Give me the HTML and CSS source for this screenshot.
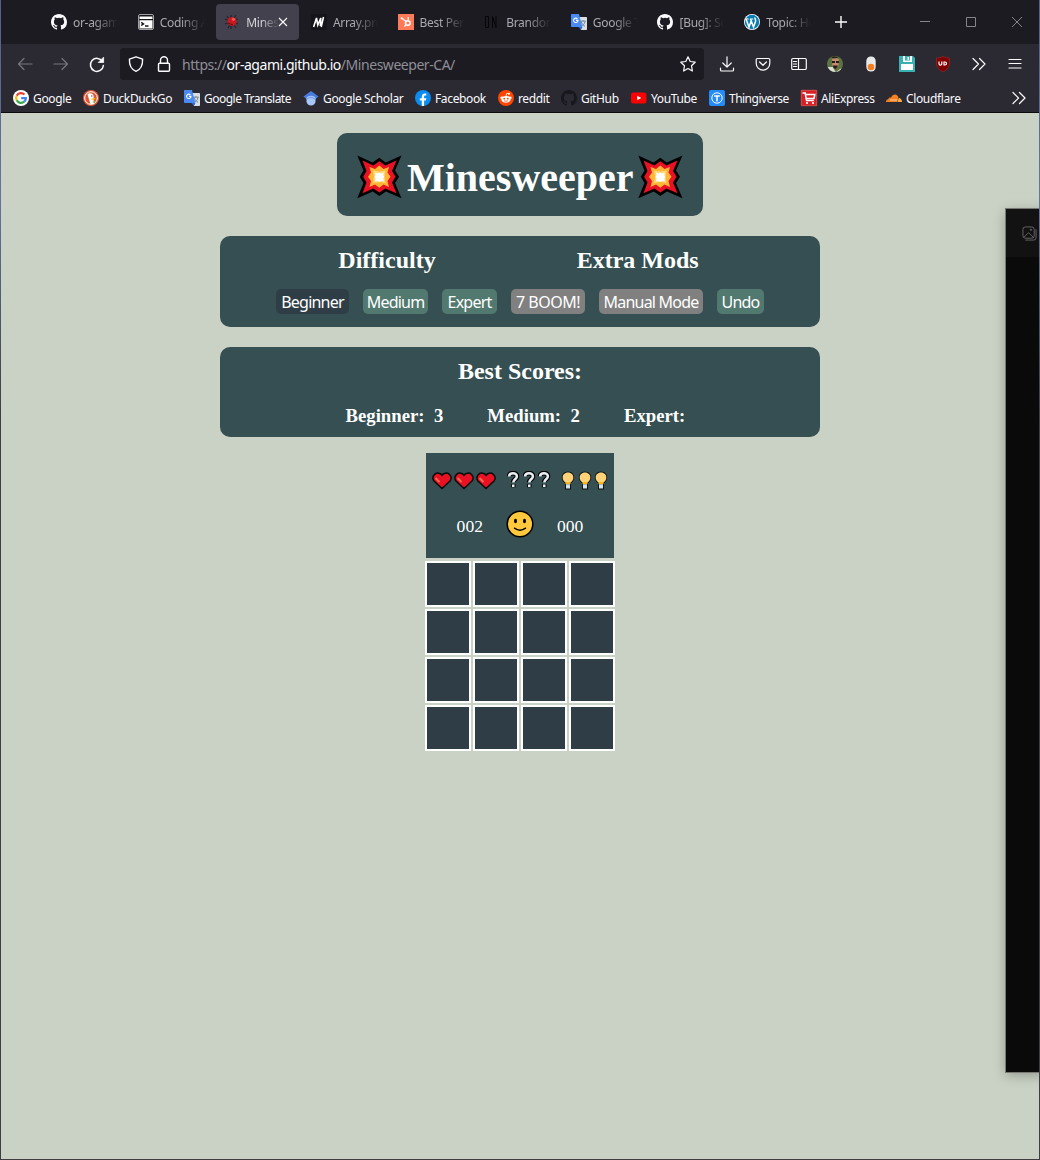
FILE: index.html
```html
<!DOCTYPE html>
<html lang="en">
<head>
<meta charset="utf-8">
<title>Minesweeper</title>
<link rel="stylesheet" href="styles.css">
</head>
<body>
<svg class="defs" aria-hidden="true">
  <symbol id="github" viewBox="0 0 16 16"><path fill="currentColor" fill-rule="evenodd" d="M8 0C3.58 0 0 3.58 0 8c0 3.54 2.29 6.53 5.47 7.59.4.07.55-.17.55-.38v-1.49c-2.01.37-2.53-.49-2.69-.94-.09-.23-.48-.94-.82-1.13-.28-.15-.68-.52-.01-.53.63-.01 1.08.58 1.23.82.72 1.21 1.87.87 2.33.66.07-.52.28-.87.51-1.07-1.78-.2-3.64-.89-3.64-3.95 0-.87.31-1.59.82-2.15-.08-.2-.36-1.02.08-2.12 0 0 .67-.21 2.2.82a7.42 7.42 0 0 1 4 0c1.53-1.04 2.2-.82 2.2-.82.44 1.1.16 1.92.08 2.12.51.56.82 1.27.82 2.15 0 3.07-1.87 3.75-3.65 3.95.29.25.54.73.54 1.48v2.2c0 .21.15.46.55.38A8 8 0 0 0 16 8c0-4.42-3.58-8-8-8z"/></symbol>
  <symbol id="translate" viewBox="0 0 16 16"><path fill="#dcdfe2" d="M6 3h9.2a.8.8 0 0 1 .8.8v11.4a.8.8 0 0 1-.8.8H10z"/><path fill="none" stroke="#6b8791" d="M9.2 7.2h5.6M12 6v1M10 7.5c.8 2.5 2.2 3.8 4 4.8M14 7.5c-.5 2.5-2 3.8-3.5 4.8"/><path fill="#4a8af4" d="M.8 0H8l3.4 13H.8a.8.8 0 0 1-.8-.8V.8A.8.8 0 0 1 .8 0z"/><path fill="#3367d6" d="M7.5 13h4L10 16z"/><path fill="none" stroke="#fff" stroke-width="1.1" d="M6.4 4.8a2.2 2.2 0 1 0 .6 1.6H5"/></symbol>
  <symbol id="boom" viewBox="0 0 45 44"><path fill="#000" d="M.3.500L15.500 7.500 22.300 2.800l6.500 4.700L44.500.500 38 15.500l4 6.300-4 6.200 6.500 15.200-15.500-6.700-6.700 4.500-6.500-4.500L.3 43.200 6.500 28l-3.700-6.200 3.700-6.300z"/><path fill="#e81224" d="M5.500 5.500L16.300 10.500l6-4.300 6 4.300L39.500 5.500 35 16l3.500 5.800L35 27.500l4.500 10.700L28.300 33.500l-6 4-6-4L5.500 38.200 9.500 27.500 6.200 21.800 9.500 16z"/><path fill="#ffb636" d="M12.500 12l5.500 2 4.300-3.500 4.200 3.500 5.500-2-1.500 5.500 3 4.300-3 4.200 1.500 6-5.500-2.500-4.200 3.200-4.300-3.200-5.500 2.500 1.500-6-3-4.200 3-4.300z"/><path fill="#ffd679" d="M16 15.500l6.300 1 6.200-1-1 6.300 1 6.200-6.200-1-6.300 1 1-6.200z"/><path fill="#fff" d="M18 17.500l2.500 1 1.800-1 2 1 2.500-1-.5 2.800 1 1.700-1 1.800.5 2.700-2.500-.5-2 1-1.800-1-2.500.5.5-2.700-1-1.800 1-1.700z"/></symbol>
  <symbol id="heart" viewBox="0 0 20 18"><path fill="#e81224" stroke="#0b0b0b" stroke-width="1.500" d="M10 16.500L2 9C-1 5 3 .2 7 1.300q2 .5 3 2 1-1.500 3-2C17 .2 21 5 18 9z"/><path fill="none" stroke="#f36b4f" stroke-width="2" d="M3.500 6l4 4"/></symbol>
  <symbol id="question" viewBox="0 0 13 18"><path fill="none" stroke="#000" stroke-width="4.800" stroke-linejoin="round" d="M2 5C2 .8 10.500 .8 10.500 5c0 3-4 3.200-4 6.300M6.500 13.500v3"/><path fill="none" stroke="#e9edf1" stroke-width="2.700" d="M2.200 5.300C2.200 1 10.300 1 10.300 5.100c0 3-3.800 3.200-3.800 6.500M6.500 13.700v2.700"/></symbol>
  <symbol id="bulb" viewBox="0 0 14 19"><path fill="#111" d="M4 18.500v-6.200C-1.500 8.500.5.600 7 .6s8.500 7.900 3 11.700v6.200z"/><path fill="#ffd27a" d="M7 1.400c5.800 0 7.300 6.800 2.400 10.200v1.200H4.600v-1.200C-.3 8.200 1.200 1.400 7 1.400z"/><path fill="#f7b719" d="M4.700 11h4.600v2.300H4.700z"/><path fill="#cfe3ee" d="M5 13.300h4v4.200H5z"/></symbol>
  <symbol id="chevrons" viewBox="0 0 16 16"><path fill="none" stroke="currentColor" stroke-width="1.200" stroke-linecap="round" stroke-linejoin="round" d="M2 2.500L7.500 8 2 13.500M8.500 2.500L14 8l-5.500 5.500"/></symbol>
</svg>
<div class="window">
  <header class="chrome">
    <div class="tabbar">
      <div class="tabs">
        <div class="tab"><svg class="ico white"><use href="#github"/></svg><span>or-agami</span></div>
        <div class="tab"><svg class="ico" viewBox="0 0 16 16"><rect x=".5" y=".5" width="15" height="15" rx="1.500" fill="#16151b" stroke="#ddd" stroke-width=".7"/><path fill="#fff" d="M1.500 2.500h13V5h-13zM1.500 6.200h13v8.300h-13z"/><path d="M3.200 8.300l2.300 1.600-2.300 1.600M7 12h3.500" fill="none" stroke="#16151b" stroke-width="1.500"/></svg><span>Coding A</span></div>
        <div class="tab active"><svg class="ico" viewBox="0 0 16 16"><path stroke="#26242c" stroke-width="1.200" d="M3 2l9 12M12 1L4 14M1 5l13 5M1 10l13-5M7 1v14"/><circle cx="8" cy="7.500" r="4.600" fill="#c51a20"/><circle cx="9.500" cy="5.300" r="1.600" fill="#f4565a"/><path stroke="#660c12" d="M4 9l5 2"/></svg><span>Minesw</span><svg class="close" viewBox="0 0 10 10"><path stroke="#fbfbfe" stroke-width="1.100" d="M1 1l8 8M9 1L1 9"/></svg></div>
        <div class="tab"><svg class="ico" viewBox="0 0 16 16"><path fill="#15141a" d="M0 0h16v16H0z"/><path fill="none" stroke="#fff" stroke-width="1.600" d="M2.600 13L5.500 4l1.300 7 3-7-.4 8M12.500 3L10.200 13"/></svg><span>Array.prot</span></div>
        <div class="tab"><svg class="ico" viewBox="0 0 16 16"><path fill="#ff7a59" d="M0 0h16v16H0z"/><circle cx="9.800" cy="9" r="2.300" fill="none" stroke="#fff" stroke-width="1.500"/><path fill="none" stroke="#fff" stroke-width="1.200" d="M3.500 4l4.600 3.400M10.200 3v3.500M8.200 10.700L6.300 12.500"/><circle cx="3.600" cy="4.200" r="1" fill="#fff"/></svg><span>Best Perso</span></div>
        <div class="tab"><svg class="ico" viewBox="0 0 16 16"><path fill="none" stroke="#060608" d="M1.500 2.500h3v11h-3zM8.500 14V2.500l3.500 11V2"/></svg><span>Brandon</span></div>
        <div class="tab"><svg class="ico"><use href="#translate"/></svg><span>Google Tr</span></div>
        <div class="tab"><svg class="ico white"><use href="#github"/></svg><span>[Bug]: Scr</span></div>
        <div class="tab"><svg class="ico" viewBox="0 0 16 16"><circle cx="8" cy="8" r="8" fill="#fff"/><circle cx="8" cy="8" r="7.200" fill="#0a7db5"/><path fill="none" stroke="#fff" stroke-width="1.500" d="M2 5l3 8 2.500-7M6.500 5l3 8 2-5.500c.6-2-1-2.500-.4-4"/><path stroke="#fff" d="M1.500 5h3.200M6 5h3.200"/></svg><span>Topic: How</span></div>
      </div>
      <svg class="newtab" viewBox="0 0 16 16"><path stroke="#fbfbfe" stroke-width="1.400" d="M8 2v12M2 8h12"/></svg>
      <div class="controls">
        <svg viewBox="0 0 12 12"><path d="M1 5.500h10"/></svg>
        <svg viewBox="0 0 12 12"><path d="M1.500 1.500h9v9h-9z"/></svg>
        <svg viewBox="0 0 12 12"><path d="M1 1l10 10M11 1L1 11"/></svg>
      </div>
    </div>
    <div class="toolbar">
      <div class="nav">
        <svg class="line dim" viewBox="0 0 16 16"><path d="M15 8H1.500M7 2.500L1.500 8 7 13.500"/></svg>
        <svg class="line dim" viewBox="0 0 16 16"><path d="M1 8h13.500M9 2.500L14.500 8 9 13.500"/></svg>
        <svg class="line" viewBox="0 0 16 16"><path stroke-width="1.500" d="M13.500 5.500A6.500 6.500 0 1 0 14.400 9.500"/><path fill="#fbfbfe" stroke-width=".8" d="M14.600 1.500v5h-5z"/></svg>
      </div>
      <div class="urlbar">
        <svg class="line" viewBox="0 0 16 16"><path stroke-width="1.400" d="M8 .8l6.600 2.300C14.800 8.600 12.500 13.500 8 15.300 3.500 13.500 1.200 8.600 1.400 3.100z"/></svg>
        <svg class="line lock" viewBox="0 0 16 16"><path stroke-width="1.400" d="M3.500 7.200h9a1 1 0 0 1 1 1v6a1 1 0 0 1-1 1h-9a1 1 0 0 1-1-1v-6a1 1 0 0 1 1-1zM4.500 7V4.300a3.500 3.500 0 0 1 7 0V7"/></svg>
        <div class="url">https://<b>or-agami.github.io</b>/Minesweeper-CA/</div>
        <svg class="line star" viewBox="0 0 16 16"><path d="M8 .8l2.200 4.700 5 .7-3.700 3.500.9 5.300L8 12.500 3.600 15l.9-5.300L.8 6.200l5-.7z"/></svg>
      </div>
      <div class="tools">
        <svg class="line" viewBox="0 0 16 16"><path d="M8 .8v10M3.800 7L8 11.200 12.200 7M1.500 12v2a1 1 0 0 0 1 1h11a1 1 0 0 0 1-1v-2"/></svg>
        <svg class="line" viewBox="0 0 16 16"><path d="M2.500 2.500h11a1.300 1.300 0 0 1 1.300 1.300v3.500a6.800 6.800 0 0 1-13.600 0V3.800a1.300 1.300 0 0 1 1.300-1.300zM4.600 6L8 9.300 11.400 6"/></svg>
        <svg class="line" viewBox="0 0 16 16"><path d="M2 2.500h12a1.300 1.300 0 0 1 1.300 1.300v8.400a1.300 1.300 0 0 1-1.300 1.300H2A1.300 1.300 0 0 1 .7 12.200V3.800A1.300 1.300 0 0 1 2 2.500zM7.500 2.500v11M2.500 5.500h3M2.500 8h3M2.500 10.500h3"/></svg>
        <svg viewBox="0 0 16 16"><circle cx="8" cy="8" r="8" fill="#5b7442"/><path fill="#dedcd7" d="M.7 11l5 0 3 5Q3 16 .7 11z"/><path fill="#e8dfc7" d="M9 16l5.500-4q-1 3-5.500 4z"/><path fill="#c48b70" d="M5 2.500q4-2.500 7 1l-.5 6-3 3.500L5.500 10z"/><path fill="#261b1b" d="M5 5h3v2H5zM9 5h3v2H9zM6 9.500h5l-2.200 3.500-2.300-1z"/><path fill="#2b241c" d="M4.500 1q4-2 7 1l-6 .500z"/></svg>
        <svg viewBox="0 0 16 16"><rect x="3.300" y=".5" width="9.400" height="15" rx="4.500" fill="#e9e9ea"/><circle cx="8" cy="11" r="3.300" fill="#f57f20"/></svg>
        <svg viewBox="0 0 16 16"><path fill="#37b1b2" d="M0 0h14l2 2v14H0z"/><path fill="#fff" d="M4 0h2v5.500H4zM11 0h2v5.500h-2zM4 4.500h9v1.500H4zM8.500 1H10v3H8.500zM2 8h12v6H2z"/></svg>
        <svg viewBox="0 0 16 16"><path fill="#800000" stroke="#a33" stroke-width=".5" d="M8 .2c2 1.300 4 1.700 6.500 1.800v5c0 4-2.500 7-6.500 8.800C4 14 1.500 11 1.500 7V2C4 1.900 6 1.500 8 .2z"/><path fill="none" stroke="#fff" stroke-width="1.200" d="M4 5.500v2.200a1.400 1.400 0 0 0 2.800 0V5.500M9 6h1a1.500 1.500 0 0 1 0 3H9z"/></svg>
        <svg class="white"><use href="#chevrons"/></svg>
        <svg class="line" viewBox="0 0 16 16"><path d="M2 3.500h12M2 7.500h12M2 12h12"/></svg>
      </div>
    </div>
    <div class="bookmarks">
      <div class="mark"><svg class="ico" viewBox="0 0 16 16"><circle cx="8" cy="8" r="8" fill="#fff"/><g fill="none" stroke-width="2.200"><path stroke="#ea4335" d="M11.500 4.600A4.900 4.900 0 0 0 3.700 5.700"/><path stroke="#fbbc05" d="M3.700 5.700a4.900 4.900 0 0 0 0 4.600"/><path stroke="#34a853" d="M3.700 10.300a4.900 4.900 0 0 0 7.500 1.400"/><path stroke="#4285f4" d="M11.200 11.700A4.900 4.900 0 0 0 12.900 8.100H8.200"/></g></svg><span>Google</span></div>
      <div class="mark"><svg class="ico" viewBox="0 0 16 16"><circle cx="8" cy="8" r="8" fill="#de5833"/><circle cx="8" cy="8" r="6.300" fill="none" stroke="#fff"/><path fill="#fff" d="M4.500 4.500C6 2.500 10.500 3 10.700 6.500L10.500 9l.5 5H7.500z"/><path fill="#fdc20a" d="M8.500 8.500l4-.5-1 1.500-3 .5z"/><path fill="#65bc46" d="M9 12l3-1v2z"/><circle cx="8.800" cy="6" r=".7" fill="#2d4f8e"/></svg><span>DuckDuckGo</span></div>
      <div class="mark tight"><svg class="ico"><use href="#translate"/></svg><span>Google Translate</span></div>
      <div class="mark"><svg class="ico" viewBox="0 0 16 16"><path fill="#4a7be0" d="M8 1l7.500 5.500L12 9.500 8 6 4 9.500.5 6.500z"/><path fill="#a8c7fa" d="M3.500 8C5 5 11 5 12.500 8v3.500c0 2-2 4-4.500 4s-4.500-2-4.500-4z"/><path fill="#6f9fee" d="M4 8.500q4-3.500 8 0v1q-4-3-8 0z"/></svg><span>Google Scholar</span></div>
      <div class="mark"><svg class="ico" viewBox="0 0 16 16"><circle cx="8" cy="8" r="8" fill="#0c8bf0"/><path fill="#fff" d="M6.800 16v-5.500H4.800V8.200h2V6.600c0-2.200 1.200-3.200 3-3.200l1.500.1v2h-1c-.9 0-1.200.5-1.200 1.200v1.500h2.200l-.4 2.300H9.100V16z"/></svg><span>Facebook</span></div>
      <div class="mark"><svg class="ico" viewBox="0 0 16 16"><circle cx="8" cy="8" r="8" fill="#ff4500"/><ellipse cx="8" cy="9.300" rx="4.600" ry="3.400" fill="#fff"/><circle cx="3.700" cy="7.800" r="1.300" fill="#fff"/><circle cx="12.300" cy="7.800" r="1.300" fill="#fff"/><circle cx="11" cy="3.800" r="1" fill="#fff"/><path stroke="#fff" fill="none" stroke-width=".8" d="M8 6l.7-2.600 2.300.4"/><circle cx="6.200" cy="8.700" r=".9" fill="#ff4500"/><circle cx="9.800" cy="8.700" r=".9" fill="#ff4500"/><path stroke="#ff4500" fill="none" stroke-width=".7" d="M6 10.700q2 1.300 4 0"/></svg><span>reddit</span></div>
      <div class="mark"><svg class="ico ink"><use href="#github"/></svg><span>GitHub</span></div>
      <div class="mark"><svg class="ico" viewBox="0 0 16 16"><rect y="2.500" width="15.500" height="11" rx="2.500" fill="#f00"/><path fill="#fff" d="M6.200 5.700L10.300 8l-4.100 2.300z"/></svg><span>YouTube</span></div>
      <div class="mark tight"><svg class="ico" viewBox="0 0 16 16"><rect width="16" height="16" rx="2" fill="#248bfb"/><circle cx="8" cy="8" r="5.200" fill="none" stroke="#fff"/><path stroke="#fff" stroke-width="1.500" d="M5.200 6h5.600M8 6v5.500"/></svg><span>Thingiverse</span></div>
      <div class="mark"><svg class="ico" viewBox="0 0 16 16"><path fill="#d81f26" stroke="#f06055" stroke-width=".7" d="M.3.300h15.400v15.400H.3z"/><path fill="none" stroke="#fff" stroke-width="1.500" d="M1.500 3h2.700l1.300 7.500h7.300M4.500 4.500h9.300L13 8.500H5.500"/><circle cx="6" cy="13" r="1.100" fill="#fff"/><circle cx="12" cy="13" r="1.100" fill="#fff"/></svg><span>AliExpress</span></div>
      <div class="mark"><svg class="ico" viewBox="0 0 16 16"><path fill="#f48120" d="M0 12c0-2 1-2.800 2.400-2.800C2.500 7.500 4 7 5 7.700 7 2.800 12 4 12.500 8L11 12z"/><path fill="#faad3f" d="M11.500 12l1.300-4c2 0 3.200 1.700 3.200 4z"/><path stroke="#fff" stroke-width=".6" d="M4 10h7.500"/></svg><span>Cloudflare</span></div>
      <svg class="more white"><use href="#chevrons"/></svg>
    </div>
  </header>

  <main class="page">
    <h1 class="card title"><svg><use href="#boom"/></svg><span>Minesweeper</span><svg><use href="#boom"/></svg></h1>
    <section class="card options">
      <div class="headings"><h2>Difficulty</h2><h2>Extra Mods</h2></div>
      <div class="buttons">
        <button class="btn selected beginner">Beginner</button><button class="btn medium">Medium</button><button class="btn expert">Expert</button><button class="btn off boom">7 BOOM!</button><button class="btn off manual">Manual Mode</button><button class="btn undo">Undo</button>
      </div>
    </section>
    <section class="card scores">
      <h2>Best Scores:</h2>
      <div class="results"><h3>Beginner:<span>3</span></h3><h3>Medium:<span>2</span></h3><h3>Expert:</h3></div>
    </section>
    <section class="game">
      <div class="status">
        <div class="items">
          <div class="hearts"><svg><use href="#heart"/></svg><svg><use href="#heart"/></svg><svg><use href="#heart"/></svg></div>
          <div class="questions"><svg><use href="#question"/></svg><svg><use href="#question"/></svg><svg><use href="#question"/></svg></div>
          <div class="bulbs"><svg><use href="#bulb"/></svg><svg><use href="#bulb"/></svg><svg><use href="#bulb"/></svg></div>
        </div>
        <div class="counters"><span>002</span><svg viewBox="0 0 28 28"><circle cx="14" cy="14" r="12.800" fill="#ffc83d" stroke="#000" stroke-width="1.500"/><ellipse cx="9.500" cy="11" rx="1.500" ry="2.300" /><ellipse cx="18.500" cy="11" rx="1.500" ry="2.300"/><path fill="none" stroke="#000" stroke-width="1.500" stroke-linecap="round" d="M8.500 18.200q5.500 4 11 0"/></svg><span>000</span></div>
      </div>
      <div class="board"><i></i><i></i><i></i><i></i><i></i><i></i><i></i><i></i><i></i><i></i><i></i><i></i><i></i><i></i><i></i><i></i></div>
    </section>
  </main>
  <aside class="side-window"><div><svg viewBox="0 0 16 16"><rect x="1" y="1" width="12" height="12" rx="2.500"/><path d="M3.500 15h9a2.500 2.500 0 0 0 2.500-2.500v-9M2 12l5-5 5.500 5.500"/><circle cx="9.500" cy="4" r=".8"/></svg></div></aside>
</div>
</body>
</html>
```

FILE: styles.css
```css
* { box-sizing: border-box; }
body { margin: 0; background: #cad2c5; color: #fff; font-family: "Liberation Serif", serif; }
svg { display: block; flex: none; overflow: visible; }
h1, h2, h3 { margin: 0; }
.defs { position: absolute; width: 0; height: 0; }
.window { position: relative; width: 1040px; height: 1160px; overflow: hidden; border: 1px solid #3d3e40; border-top: 0; border-image: linear-gradient(#53608a, #66739d 200px, #3d3e40 420px) 1; border-image-width: 0 1px 1px 1px; }

/* browser chrome */
.chrome { height: 113px; background: #2b2a33; border-bottom: 1px solid #0c0c0d; font-family: "Noto Sans", sans-serif; font-size: 12px; color: #fbfbfe; }
.ico { width: 16px; height: 16px; }
.white { color: #fbfbfe; }
.ink { color: #17181b; }
.tabbar { display: flex; align-items: center; height: 44px; background: #1c1b22; padding-left: 42px; }
.tabs { display: grid; grid-template-columns: repeat(9, 86.65px); }
.tab { display: flex; align-items: center; gap: 6px; width: 83px; height: 36px; padding: 0 8px; border-radius: 4px; color: #aaa9b0; letter-spacing: -.3px; }
.tab span { width: 46px; overflow: hidden; white-space: nowrap; -webkit-mask-image: linear-gradient(90deg, #000 45%, transparent 100%); mask-image: linear-gradient(90deg, #000 45%, transparent 100%); }
.tab.active { background: #42414d; color: #d5d4da; }
.tab.active span { width: 33px; }
.close { width: 10px; height: 10px; margin-left: -7px; }
.newtab { width: 16px; height: 16px; margin-left: 10px; }
.controls { display: flex; gap: 34px; margin-left: 70px; }
.controls svg { width: 12px; height: 12px; fill: none; stroke: #85848b; }
.toolbar { display: flex; align-items: center; height: 40px; }
.line { fill: none; stroke: #fbfbfe; stroke-width: 1.2; stroke-linecap: round; stroke-linejoin: round; }
.dim { stroke: #77767e; }
.nav { display: flex; gap: 20px; width: 119px; padding-left: 16px; }
.nav svg, .urlbar svg, .tools svg { width: 16px; height: 16px; }
.urlbar { display: flex; align-items: center; width: 584px; height: 32px; padding: 0 8px; border-radius: 4px; background: #1c1b22; }
.urlbar .lock { margin-left: 12px; }
.url { flex: 1; margin-left: 10px; padding-top: 1px; color: #8f8e96; font-size: 14px; letter-spacing: -.46px; white-space: nowrap; }
.url b { font-weight: 400; color: #fbfbfe; }
.tools { display: flex; gap: 20px; margin-left: 15px; }
.bookmarks { display: grid; grid-template-columns: 70px 101px 119px 112px 83px 63px 70px 78px 92px 85px 124.5px 16px; height: 28px; padding-left: 12px; align-items: center; }
.mark { display: flex; align-items: center; gap: 4px; white-space: nowrap; letter-spacing: -.36px; }
.mark.tight { letter-spacing: -.52px; }
.bookmarks .more { width: 16px; height: 16px; }

/* game page */
.page { display: flex; flex-direction: column; align-items: center; padding-top: 20px; }
.card { background: #354f52; border-radius: 10px; }
.title { display: flex; width: 366px; height: 83px; padding: 22px 20px; font-size: 40px; line-height: 46px; }
.title svg { width: 45px; height: 44px; }
.title span { width: 236px; padding-left: 5px; }
.options { width: 600px; height: 91px; margin-top: 20px; padding-top: 10px; }
h2 { font-size: 24px; line-height: 28px; }
.headings { display: flex; justify-content: center; gap: 141px; margin-right: 3px; }
.buttons { display: flex; justify-content: center; gap: 14px; margin-top: 15px; }
.btn { height: 25px; padding: 1px 0 0; border: 0; border-radius: 5px; background: #52796f; color: #fff; font: 16px/24px "Noto Sans", sans-serif; letter-spacing: -.78px; white-space: nowrap; }
.selected { background: #2f3e46; }
.off { background: #808080; }
.beginner { width: 73px; }
.medium { width: 65px; }
.expert { width: 55px; }
.boom { width: 74px; letter-spacing: -.5px; }
.manual { width: 104px; }
.undo { width: 47px; }
.scores { width: 600px; height: 90px; margin-top: 20px; padding-top: 10px; text-align: center; }
.results { display: flex; gap: 44px; margin: 20px 0 0 125.500px; }
h3 { font-size: 18.72px; line-height: 22px; }
h3 span { margin-left: 9.500px; }
.game { display: flex; flex-direction: column; align-items: center; margin-top: 16px; }
.status { width: 188px; height: 105px; background: #354f52; padding: 18px 6px 0; }
.items { display: flex; justify-content: space-between; height: 19px; }
.items > div { display: flex; }
.hearts { gap: 2px; padding-top: .5px; }
.hearts svg { width: 20px; height: 18px; }
.questions { gap: 3px; margin-left: 3px; }
.questions svg { width: 12.500px; height: 18px; }
.bulbs { gap: 2.500px; margin-left: 2px; }
.bulbs svg { width: 14px; height: 19px; }
.counters { display: flex; align-items: center; justify-content: center; gap: 23px; margin-top: 19.500px; font-size: 17.600px; line-height: 20px; }
.counters svg { width: 28px; height: 28px; }
.counters span { padding-top: 4px; }
.board { display: grid; grid-template-columns: repeat(4, 46px); gap: 2px; margin-top: 3px; }
.board i { height: 46px; border: 2px solid #fff; background: #2f3e46; }

/* window overlapping the right edge */
.side-window { position: absolute; left: 1005px; top: 209px; width: 40px; height: 863px; background: #0a0a0a; box-shadow: 0 0 0 1px #777b74, 0 3px 12px rgba(0, 0, 0, .3); }
.side-window div { height: 48px; padding: 17px 16px; background: #121212; }
.side-window svg { width: 15px; height: 15px; fill: none; stroke: #66666a; }
```
